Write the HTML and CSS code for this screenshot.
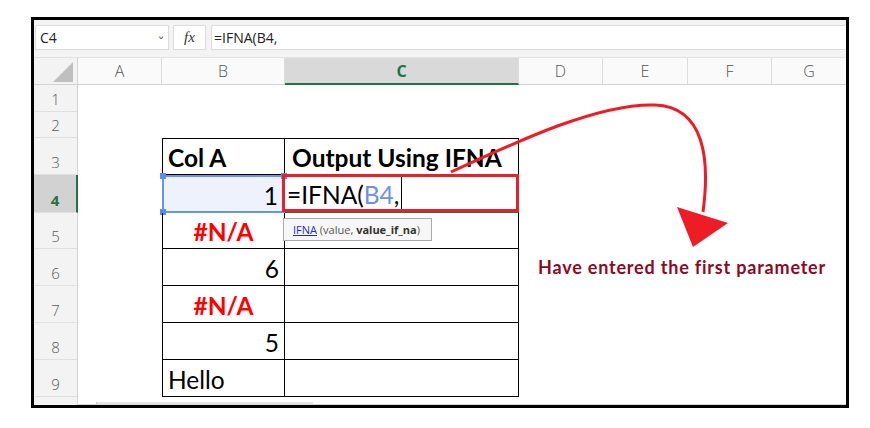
FILE: index.html
```html
<!DOCTYPE html>
<html>
<head>
<meta charset="utf-8">
<link rel="stylesheet" href="styles.css">
</head>
<body>
<div class="frame">
  <div class="fbar">
    <div class="namebox"><span>C4</span><span class="chev">&#711;</span></div>
    <div class="fxbox"><span class="fx">fx</span></div>
    <div class="finput">=IFNA(B4,</div>
  </div>
  <div class="sheet">
    <div class="corner"><svg width="20" height="20" viewBox="0 0 20 20"><polygon points="20,0 20,20 0,20" fill="#bfbfbf"/></svg></div>
    <div class="ch">A</div>
    <div class="ch">B</div>
    <div class="ch ch-sel">C</div>
    <div class="ch">D</div>
    <div class="ch">E</div>
    <div class="ch">F</div>
    <div class="ch ch-last">G</div>

    <div class="rh">1</div><div class="c span7"></div>
    <div class="rh">2</div><div class="c span7"></div>

    <div class="rh">3</div><div class="c"></div>
    <div class="c tb tl tt bold">Col A</div><div class="c tc tt bold hdr">Output Using IFNA</div><div class="c span4"></div>

    <div class="rh rh-sel">4</div><div class="c"></div>
    <div class="c b4 right">1<span class="h h1"></span><span class="h h2"></span><span class="h h3"></span></div>
    <div class="c tc c4"><span>=IFNA(<span class="ref">B4</span>,</span><span class="caret"></span><span class="redbox"></span>
      <div class="tip"><span class="lnk">IFNA</span> (value, <b>value_if_na</b>)</div>
    </div>
    <div class="c span4"></div>

    <div class="rh">5</div><div class="c"></div>
    <div class="c tb tl center na">#N/A</div><div class="c tc"></div><div class="c span4"></div>

    <div class="rh">6</div><div class="c"></div>
    <div class="c tb tl right">6</div><div class="c tc"></div><div class="c span4"></div>

    <div class="rh">7</div><div class="c"></div>
    <div class="c tb tl center na">#N/A</div><div class="c tc"></div><div class="c span4"></div>

    <div class="rh">8</div><div class="c"></div>
    <div class="c tb tl right">5</div><div class="c tc"></div><div class="c span4"></div>

    <div class="rh">9</div><div class="c"></div>
    <div class="c tb tl">Hello</div><div class="c tc"></div><div class="c span4"></div>

    <div class="rh rh-end"></div><div class="c span7 endrow"><span class="scroll"></span></div>
  </div>
</div>
<div class="note">Have entered the first parameter</div>
<svg class="arrow" width="870" height="428" viewBox="0 0 870 428">
  <path d="M451,172 C520,140 600,103 655,105 C705,107 710,160 703,212" fill="none" stroke="#ee1c25" stroke-width="3"/>
  <polygon points="677,207 728,223 693,247" fill="#ee1c25"/>
</svg>
</body>
</html>
```
FILE: styles.css
```css
html, body { margin: 0; padding: 0; background: #fff; }
body { padding: 17px 0 0 31px; position: relative; width: 870px; height: 428px; box-sizing: border-box; overflow: hidden; }

.frame {
  width: 818px; height: 391px; box-sizing: border-box;
  border: 3px solid #000; position: relative; overflow: visible;
  background: #fff;
}

.fbar {
  height: 38px; box-sizing: border-box; background: #f3f3f3;
  display: flex; align-items: flex-start; gap: 4px;
  padding: 5px 0 0 1px; border-bottom: 1px solid #e2e2e2;
  font-family: "Open Sans", "Noto Sans", sans-serif; font-size: 14px; color: #222;
}
.namebox {
  width: 134px; height: 25px; box-sizing: border-box; background: #fff;
  border: 1px solid #dcdcdc; display: flex; align-items: center;
  justify-content: space-between; padding: 0 4px 0 4px;
}
.chev { color: #666; font-size: 14px; margin-top: 10px; }
.fxbox {
  width: 33px; height: 25px; box-sizing: border-box; background: #fff;
  border: 1px solid #dcdcdc; display: flex; align-items: center; justify-content: center;
}
.fx { font-family: "Liberation Serif", serif; font-style: italic; font-size: 15px; color: #333; }
.finput {
  flex: 1; height: 25px; box-sizing: border-box; background: #fff; margin-left: 1px;
  border: 1px solid #dcdcdc; border-right: none; padding: 0 0 0 2px; line-height: 23px;
}

.sheet {
  display: grid;
  grid-template-columns: 44px 84px 123px 234px 84px 85px 84px 1fr;
  grid-template-rows: 27px 27px 26px 37px 38px 36px 37px 37px 37px 37px 1fr;
  height: 347px;
  font-family: "Lato", "Liberation Sans", sans-serif;
}
.corner {
  background: #f3f3f3; border-right: 1px solid #d4d4d4; border-bottom: 1px solid #d4d4d4;
  display: flex; align-items: flex-end; justify-content: flex-end; padding: 0 4px 2px 0;
  box-sizing: border-box;
}
.ch {
  background: #fafafa; border-right: 1px solid #dcdcdc; border-bottom: 1px solid #d0d0d0;
  box-sizing: border-box; display: flex; align-items: center; justify-content: center;
  font-family: "Open Sans", "Noto Sans", sans-serif; font-size: 16px; color: #555; font-weight: 300;
}
.ch-last { border-right: none; }
.ch-sel { background: #d9d9d9; color: #217346; font-weight: 700; border-bottom: 2px solid #217346; }

.rh {
  background: #f3f3f3; border-right: 1px solid #d4d4d4; border-bottom: 1px solid #e0e0e0;
  box-sizing: border-box; display: flex; align-items: flex-end; justify-content: center;
  padding-bottom: 3px; line-height: 18px;
  font-family: "Open Sans", "Noto Sans", sans-serif; font-size: 15px; color: #5a5a5a; font-weight: 300;
}
.rh-sel { background: #d2d2d2; color: #217346; font-weight: 700; border-right: 2px solid #217346; }
.rh-end { border-bottom: none; }

.c {
  box-sizing: border-box; position: relative; display: flex; align-items: flex-end;
  font-size: 24.5px; line-height: 28px; color: #000; padding: 0 5px 2px 5px;
}
.span7 { grid-column: span 7; }
.span4 { grid-column: span 4; }
.tb { border-left: 1px solid #000; border-right: 1px solid #000; border-bottom: 1px solid #000; }
.tc { border-right: 1px solid #000; border-bottom: 1px solid #000; padding-left: 2px; }
.hdr { padding-left: 7px; }
.tt { border-top: 1px solid #000; }
.bold { font-weight: 700; }
.right { justify-content: flex-end; }
.center { justify-content: center; }
.na { color: #ff0000; font-weight: 700; }

.b4 {
  background: #edf2fc; border: 2px solid #6a95e6; padding-right: 5px; padding-bottom: 1px;
}
.h { position: absolute; width: 6px; height: 6px; background: #5b8def; }
.h1 { left: -4px; top: -4px; }
.h2 { right: -4px; top: -4px; }
.h3 { left: -4px; bottom: -4px; }

.c4 { border-bottom: 2px solid #217346; overflow: visible; }
.ref { color: #6f8fe8; }
.caret { display: inline-block; width: 1px; height: 34px; background: #000; margin-left: 2px; align-self: center; margin-bottom: -2px; }
.redbox {
  position: absolute; left: -3px; top: -1px; right: -1px; bottom: -1px;
  border: 3px solid #e5212b; pointer-events: none;
}
.tip {
  position: absolute; left: -2px; top: 43px; width: 149px; height: 23px; box-sizing: border-box;
  background: #f7f7f7; border: 1px solid #ababab; z-index: 2;
  font-family: "Open Sans", "Noto Sans", sans-serif; font-size: 11px; line-height: 21px;
  color: #555; padding-left: 9px; white-space: nowrap;
}
.tip b { color: #333; }
.lnk { color: #1a2be0; text-decoration: underline; }

.endrow { padding: 0; align-items: flex-end; border-bottom: 1px solid #d6d6d6; }
.scroll { display: block; width: 216px; height: 2px; margin-left: 18px; background: #e4e4e4; border-left: 1px solid #c8c8c8; }

.note {
  position: absolute; left: 538px; top: 256px;
  font-family: "Lato", "Liberation Sans", sans-serif; font-weight: 700; font-size: 18px;
  letter-spacing: 0.8px; color: #8b0a28; white-space: nowrap;
}
.arrow { position: absolute; left: 0; top: 0; pointer-events: none; }
```
